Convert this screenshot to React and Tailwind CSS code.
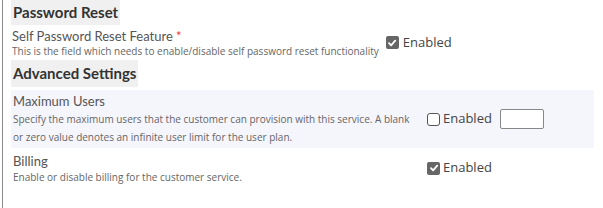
import React from "react";

function Check({ checked }) {
  return checked ? (
    <span className="inline-flex h-[13px] w-[13px] items-center justify-center rounded-[2px] bg-[#666]">
      <svg width="10" height="10" viewBox="0 0 10 10">
        <path d="M2 5.2 L4.1 7.3 L8.2 2.6" fill="none" stroke="white" strokeWidth="1.8" strokeLinecap="round" strokeLinejoin="round" />
      </svg>
    </span>
  ) : (
    <span className="inline-block h-[13px] w-[13px] rounded-[3px] border border-[#555] bg-white"></span>
  );
}

const label = "font-['Lato',sans-serif] text-[13px] text-[#555]";
const heading = "inline-block bg-[#f0f0f0] px-[2px] font-['Lato',sans-serif] text-[15px] font-bold text-[#333]";

export default function App() {
  return (
    <div className="h-[208px] w-full bg-white" style={{ fontFamily: "'Open Sans', sans-serif" }}>
      <div className="ml-[2px] h-full border-l border-[#8a8a8a] pl-[8px]">
        {/* Password Reset */}
        <div className={heading + " h-[25px] leading-[25px]"}>Password Reset</div>
        <div className="flex h-[35px] items-center gap-[7px] pl-[1px]">
          <div>
            <div className={label + " leading-[16px]"}>
              Self Password Reset Feature <span className="text-[#e8374a]">*</span>
            </div>
            <div className="text-[10px] leading-[14px] text-[#666]">
              This is the field which needs to enable/disable self password reset functionality
            </div>
          </div>
          <label className="flex items-center gap-[4px] text-[13px] text-[#444]">
            <Check checked />
            Enabled
          </label>
        </div>

        {/* Advanced Settings */}
        <div className={heading + " h-[27px] leading-[27px]"}>Advanced Settings</div>
        <div className="mt-[3px] w-[583px]">
          <div className="flex h-[58px] items-center bg-[#f5f5fc] pl-[2px]">
            <div className="w-[404px]">
              <div className={label + " leading-[18px]"}>Maximum Users</div>
              <div className="text-[10px] leading-[18px] text-[#666]">
                Specify the maximum users that the customer can provision with this service. A blank or zero value denotes an infinite user limit for the user plan.
              </div>
            </div>
            <label className="ml-[10px] flex items-center gap-[3px] text-[13px] text-[#444]">
              <Check />
              Enabled
            </label>
            <input className="ml-[8px] h-[20px] w-[44px] rounded-[2px] border border-[#888] bg-white" />
          </div>
          <div className="flex h-[40px] items-center pl-[2px]">
            <div className="w-[404px]">
              <div className={label + " leading-[17px]"}>Billing</div>
              <div className="text-[10px] leading-[14px] text-[#666]">
                Enable or disable billing for the customer service.
              </div>
            </div>
            <label className="ml-[10px] flex items-center gap-[3px] text-[13px] text-[#444]">
              <Check checked />
              Enabled
            </label>
          </div>
        </div>
      </div>
    </div>
  );
}
